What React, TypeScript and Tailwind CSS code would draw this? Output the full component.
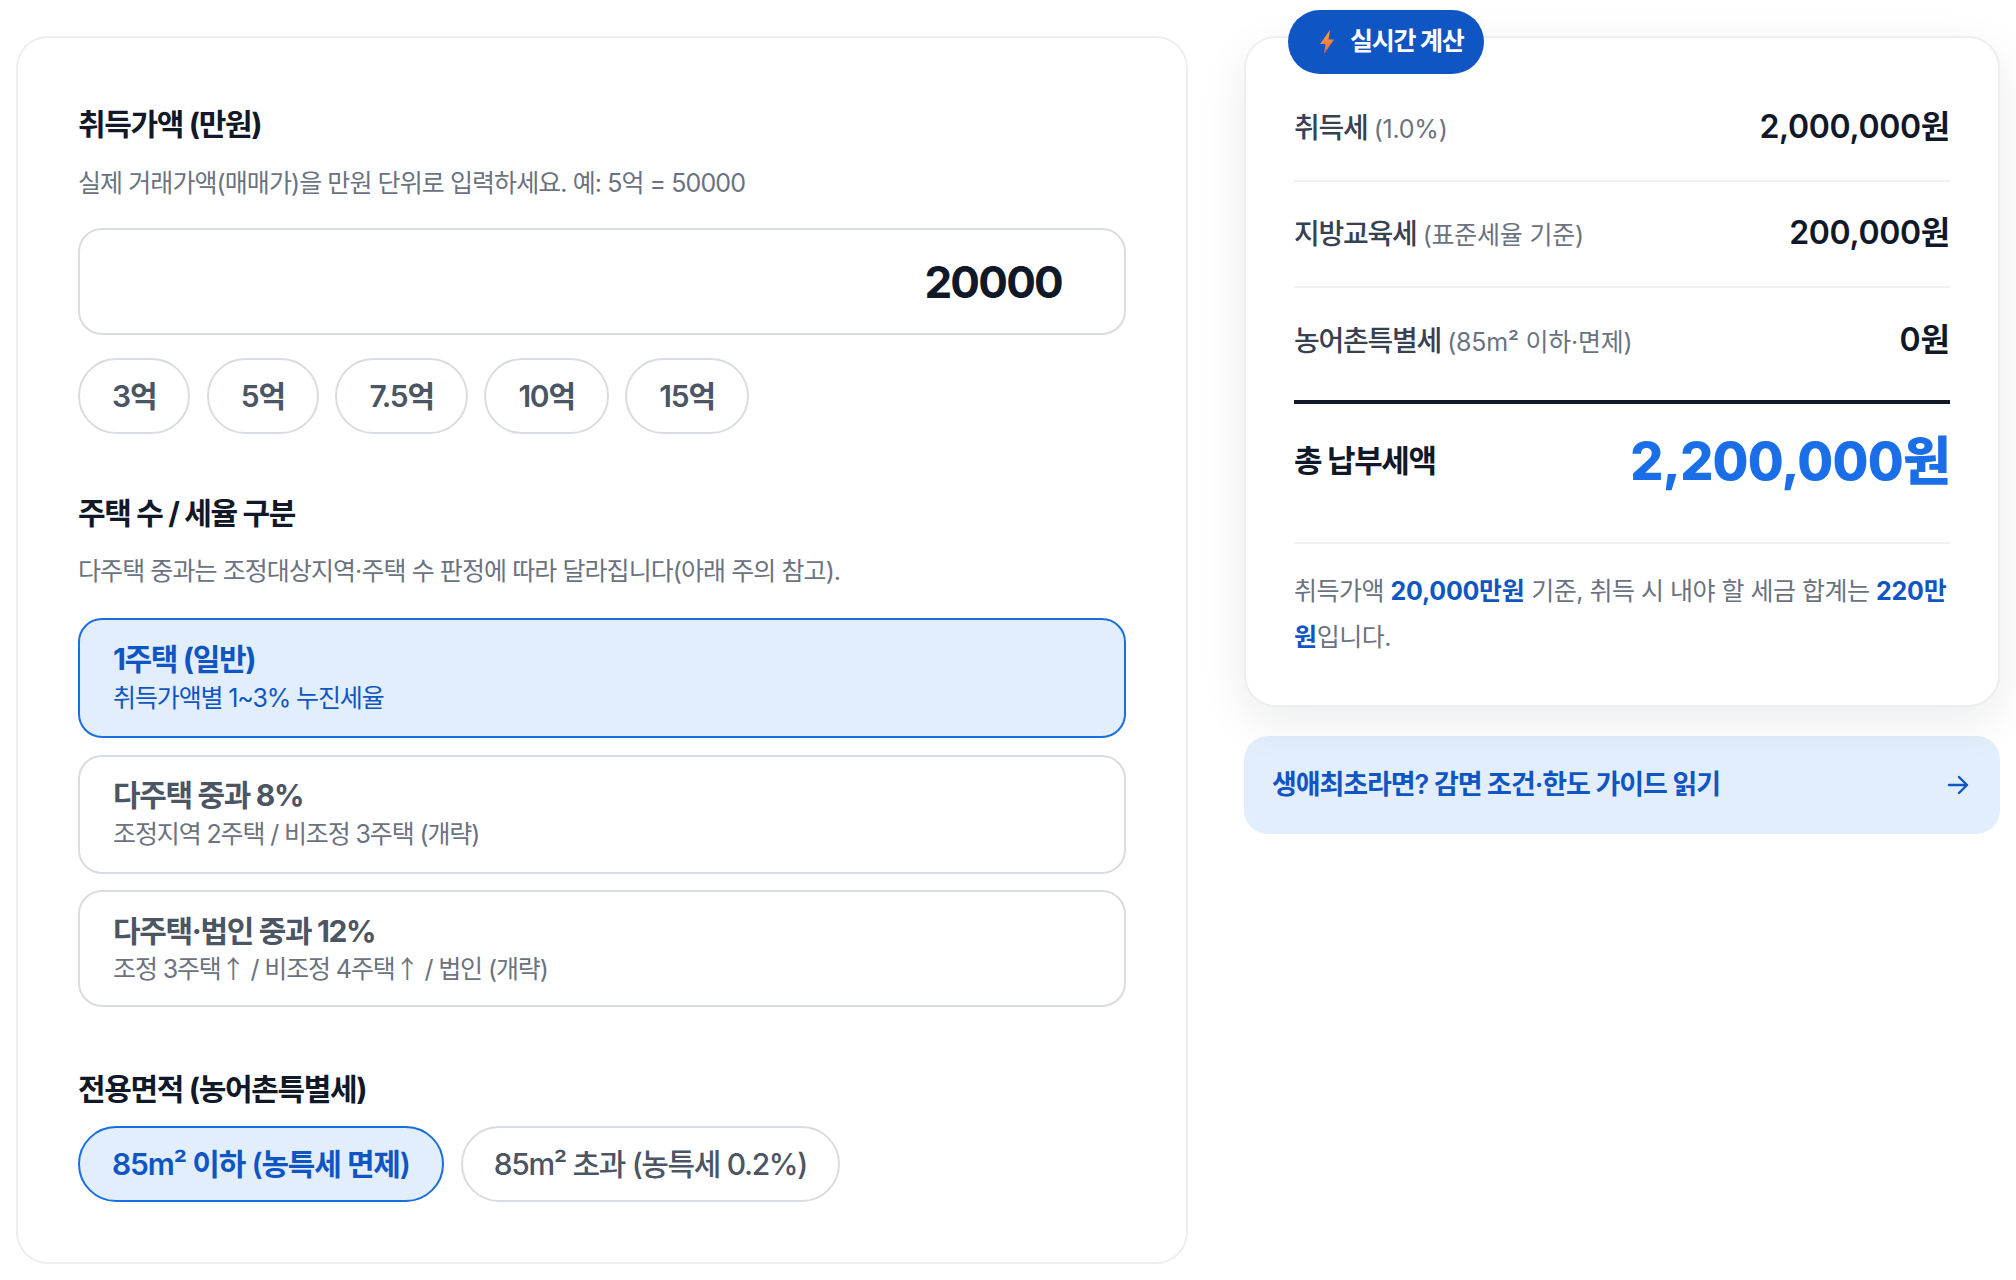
import React, { useState } from "react";

const sans = "font-['Inter','Noto_Sans_CJK_KR',sans-serif]";

const quick = ["3억", "5억", "7.5억", "10억", "15억"];

const Up = () => <span className="font-['Noto_Sans_CJK_KR',sans-serif]">↑</span>;

const houseOptions = [
  { id: "one", title: "1주택 (일반)", desc: <>취득가액별 1~3% 누진세율</>, h: "h-[120px]", lead: "leading-[38px]" },
  { id: "multi8", title: "다주택 중과 8%", desc: <>조정지역 2주택 / 비조정 3주택 (개략)</>, h: "h-[119px]", lead: "leading-[38px]" },
  { id: "multi12", title: "다주택·법인 중과 12%", desc: <>조정 3주택<Up /> / 비조정 4주택<Up /> / 법인 (개략)</>, h: "h-[117px]", lead: "leading-[33px]" },
];

function Row({ label, note, value }: { label: string; note: string; value: string }) {
  return (
    <div className="flex items-center justify-between h-[106px] border-b-2 border-[#f0f1f3]">
      <div className="pb-[1px] text-[28px] tracking-[-0.045em] text-[#374151] font-medium">
        {label} <span className="text-[25px] tracking-[-0.01em] text-[#6b7280] font-normal">{note}</span>
      </div>
      <div className="pb-[2px] text-[32px] tracking-[-0.01em] font-semibold text-[#111827]">{value}</div>
    </div>
  );
}

export default function App() {
  const [house, setHouse] = useState("one");
  const [under85, setUnder85] = useState(true);

  return (
    <div className={`${sans} min-h-[1280px] bg-white grid grid-cols-[1172px_756px] gap-[56px] pl-[16px] pt-[36px] items-start`}>
      {/* input side */}
      <div className="border-2 border-[#eceef1] rounded-[32px] h-[1228px] px-[60px] pt-[66px]">
        <h3 className="text-[30px] leading-[40px] font-bold tracking-[-0.045em] text-[#111827]">취득가액 (만원)</h3>
        <p className="mt-[21px] text-[25px] leading-[36px] tracking-[-0.037em] text-[#6b7280]">
          실제 거래가액(매매가)을 만원 단위로 입력하세요. 예: 5억 = 50000
        </p>
        <input
          readOnly
          value="20000"
          className="mt-[27px] block w-full h-[107px] border-2 border-[#d9dce1] rounded-[24px] pr-[62px] text-right text-[44px] font-bold tracking-[-0.04em] text-[#111827] outline-none"
        />
        <div className="flex gap-[16.5px] mt-[23px]">
          {quick.map((q) => (
            <button key={q} className="h-[76px] px-[32px] rounded-full border-2 border-[#d9dce1] text-[30px] font-semibold tracking-[-0.04em] text-[#4b5563]">
              {q}
            </button>
          ))}
        </div>

        <h3 className="mt-[59px] text-[30px] leading-[40px] font-bold tracking-[-0.045em] text-[#111827]">주택 수 / 세율 구분</h3>
        <p className="mt-[20px] text-[25px] leading-[36px] tracking-[-0.037em] text-[#6b7280]">
          다주택 중과는 조정대상지역·주택 수 판정에 따라 달라집니다(아래 주의 참고).
        </p>
        <div className="flex flex-col gap-[16.5px] mt-[29px]">
          {houseOptions.map((o) => {
            const on = house === o.id;
            return (
              <button
                key={o.id}
                onClick={() => setHouse(o.id)}
                className={`${o.h} px-[33px] rounded-[24px] border-2 text-left ${on ? "border-[#1a6fe0] bg-[#e3eefc]" : "border-[#d9dce1]"}`}
              >
                <div className={`text-[30px] leading-[40px] font-bold tracking-[-0.045em] ${on ? "text-[#0f56c4]" : "text-[#4b5563]"}`}>{o.title}</div>
                <div className={`text-[25px] ${o.lead} tracking-[-0.045em] ${on ? "text-[#0f56c4]" : "text-[#6b7280]"}`}>{o.desc}</div>
              </button>
            );
          })}
        </div>

        <h3 className="mt-[62px] text-[30px] leading-[40px] font-bold tracking-[-0.045em] text-[#111827]">전용면적 (농어촌특별세)</h3>
        <div className="flex gap-[17px] mt-[17px]">
          <button
            onClick={() => setUnder85(true)}
            className={`h-[76px] px-[32px] rounded-full border-2 text-[30px] font-semibold tracking-[-0.04em] ${under85 ? "border-[#1a6fe0] bg-[#e3eefc] text-[#0f56c4]" : "border-[#d9dce1] text-[#4b5563]"}`}
          >
            85m² 이하 (농특세 면제)
          </button>
          <button
            onClick={() => setUnder85(false)}
            className={`h-[76px] px-[31px] rounded-full border-2 text-[30px] font-medium tracking-[-0.045em] ${under85 ? "border-[#d9dce1] text-[#4b5563]" : "border-[#1a6fe0] bg-[#e3eefc] text-[#0f56c4]"}`}
          >
            85m² 초과 (농특세 0.2%)
          </button>
        </div>
      </div>

      {/* result side */}
      <div className="flex flex-col gap-[29px]">
        <div className="relative h-[671px] bg-white border-2 border-[#eceef1] rounded-[32px] px-[48px] pt-[38px] shadow-[0_16px_48px_rgba(17,24,39,0.08)]">
          <div className="absolute left-[42px] top-[-28px] h-[64px] w-[196px] rounded-full bg-[#0f56c4] flex items-center pl-[32px] gap-[16px] text-white text-[25px] font-bold tracking-[-0.05em]">
            <svg width="14" height="24" viewBox="0 0 14 24">
              <defs>
                <linearGradient id="zap" x1="0" y1="0" x2="0" y2="1">
                  <stop offset="0" stopColor="#f9a83a" />
                  <stop offset="0.7" stopColor="#f2763c" />
                  <stop offset="1" stopColor="#d9605a" />
                </linearGradient>
              </defs>
              <path d="M10 0 0 14h5.5L4 24 14 9.5H8.5z" fill="url(#zap)" />
            </svg>
            실시간 계산
          </div>
          <Row label="취득세" note="(1.0%)" value="2,000,000원" />
          <Row label="지방교육세" note="(표준세율 기준)" value="200,000원" />
          <div className="flex items-center justify-between h-[106px]">
            <div className="pb-[1px] text-[28px] tracking-[-0.045em] text-[#374151] font-medium">
              농어촌특별세 <span className="text-[25px] tracking-[-0.01em] text-[#6b7280] font-normal">(85m² 이하·면제)</span>
            </div>
            <div className="pb-[2px] text-[32px] font-semibold text-[#111827]">0원</div>
          </div>
          <div className="mt-[6px] border-t-4 border-[#111827] flex items-center justify-between h-[144px] pb-[23px] border-b-2 border-b-[#f0f1f3]">
            <div className="text-[31px] font-bold tracking-[-0.045em] text-[#111827]">총 납부세액</div>
            <div className="text-[52px] font-extrabold tracking-[-0.015em] text-[#1a6fe8]">2,200,000원</div>
          </div>
          <p className="mt-[24px] text-[25px] leading-[46px] tracking-[-0.02em] text-[#6b7280]">
            취득가액 <b className="text-[#0f56c4] font-bold tracking-[-0.01em]">20,000만원</b> 기준, 취득 시 내야 할 세금 합계는 <b className="text-[#0f56c4] font-bold tracking-[-0.01em]">220만원</b>입니다.
          </p>
        </div>
        <a className="flex items-center justify-between h-[98px] rounded-[24px] bg-[#e3eefc] pl-[28px] pr-[30px] text-[27px] font-semibold tracking-[-0.04em] text-[#0f56c4]">
          생애최초라면? 감면 조건·한도 가이드 읽기
          <svg width="24" height="24" viewBox="0 0 24 24" fill="none" stroke="currentColor" strokeWidth="2.4" strokeLinecap="round" strokeLinejoin="round">
            <path d="M3 12h18M13 4l8 8-8 8" />
          </svg>
        </a>
      </div>
    </div>
  );
}
